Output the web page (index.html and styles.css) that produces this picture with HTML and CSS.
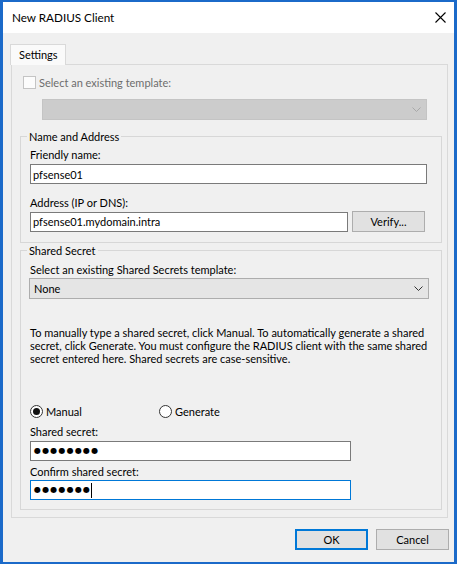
FILE: index.html
```html
<!DOCTYPE html>
<html>
<head>
<meta charset="utf-8">
<link rel="stylesheet" href="styles.css">
</head>
<body>
<div class="window">
  <div class="titlebar">
    <span class="title">New RADIUS Client</span>
    <svg class="close" width="11" height="11" viewBox="0 0 11 11"><path d="M0.5 0.5L10.5 10.5M10.5 0.5L0.5 10.5" stroke="#000" stroke-width="1.1" fill="none"/></svg>
  </div>
  <div class="body">
    <div class="tabs"><div class="tab">Settings</div></div>
    <div class="panel">
      <div class="check-row">
        <span class="checkbox"></span>
        <span class="disabled-text">Select an existing template:</span>
      </div>
      <div class="combo combo-disabled">
        <span></span>
        <svg class="chev" width="9" height="5" viewBox="0 0 9 5"><path d="M0.5 0.5L4.5 4.5L8.5 0.5" stroke="#a8a8a8" fill="none"/></svg>
      </div>

      <fieldset class="group group-name">
        <legend>Name and Address</legend>
        <label class="lbl lbl-first">Friendly name:</label>
        <input class="textbox tb-friendly" type="text" value="pfsense01">
        <label class="lbl lbl-addr">Address (IP or DNS):</label>
        <div class="addr-row">
          <input class="textbox tb-addr" type="text" value="pfsense01.mydomain.intra">
          <button class="btn btn-verify">Verify...</button>
        </div>
      </fieldset>

      <fieldset class="group group-secret">
        <legend>Shared Secret</legend>
        <label class="lbl lbl-tpl">Select an existing Shared Secrets template:</label>
        <div class="combo combo-active">
          <span>None</span>
          <svg class="chev" width="9" height="5" viewBox="0 0 9 5"><path d="M0.5 0.5L4.5 4.5L8.5 0.5" stroke="#333" fill="none"/></svg>
        </div>
        <p class="help">To manually type a shared secret, click Manual. To automatically generate a shared secret, click Generate. You must configure the RADIUS client with the same shared secret entered here. Shared secrets are case-sensitive.</p>
        <div class="radio-row">
          <div class="radio-item radio-manual"><span class="radio checked"></span><span>Manual</span></div>
          <div class="radio-item"><span class="radio"></span><span>Generate</span></div>
        </div>
        <label class="lbl lbl-secret">Shared secret:</label>
        <div class="pwbox"><span class="dots">●●●●●●●●</span></div>
        <label class="lbl lbl-confirm">Confirm shared secret:</label>
        <div class="pwbox pwbox-focus"><span class="dots">●●●●●●●</span><span class="caret"></span></div>
      </fieldset>
    </div>
    <div class="buttons">
      <button class="btn btn-ok">OK</button>
      <button class="btn btn-cancel">Cancel</button>
    </div>
  </div>
</div>
</body>
</html>
```
FILE: styles.css
```css
* { box-sizing: border-box; }
html, body { margin: 0; padding: 0; background: #1b6ac9; }
body { font-family: Lato, "Liberation Sans", Arial, sans-serif; font-size: 11px; color: #000; }

.window {
  width: 457px;
  height: 564px;
  border-style: solid;
  border-color: #1b6ac9;
  border-width: 2px 3px 2px 3px;
  background: #f0f0f0;
  display: flex;
  flex-direction: column;
}

.titlebar {
  height: 31px;
  flex: none;
  background: #fff;
  display: flex;
  align-items: center;
  justify-content: space-between;
  padding: 0 8px 0 9px;
}
.title { font-size: 11.7px; line-height: 15px; }
.close { display: block; }

.body {
  flex: 1;
  padding: 11px 6px 0 7px;
  display: flex;
  flex-direction: column;
}

.tabs { display: flex; height: 20px; }
.tab {
  height: 21px;
  padding: 0 7px 0 8px;
  line-height: 19px;
  background: #fafafa;
  border: 1px solid #d9d9d9;
  border-bottom: none;
  position: relative;
  z-index: 1;
}

.panel {
  margin-left: 1px;
  border: 1px solid #d9d9d9;
  padding: 10px 5px 7px 8px;
  background: #f0f0f0;
  display: flex;
  flex-direction: column;
}

.check-row {
  display: flex;
  align-items: center;
  height: 15px;
  line-height: 15px;
}
.checkbox {
  width: 13px;
  height: 13px;
  margin: 0 3px 0 3px;
  border: 1px solid #c4c4c4;
  background: #fcfcfc;
}
.disabled-text { color: #6d6d6d; }

.combo {
  display: flex;
  align-items: center;
  justify-content: space-between;
  height: 21px;
  border: 1px solid #c2c2c2;
  padding: 0 5px 0 4px;
}
.combo-disabled {
  margin: 9px 0 0 22px;
  width: 385px;
  background: #cccccc;
  border-color: #c4c4c4;
}
.combo-active {
  margin: 1px 0 0 -1px;
  width: 400px;
  background: #e5e5e5;
  border-color: #adadad;
}
.chev { display: block; }

.group {
  margin: 0;
  padding: 0 9px 0 9px;
  border: 1px solid #d7d7d7;
  min-inline-size: 0;
}
.group legend {
  padding: 0 2px;
  margin-left: -3px;
  line-height: 15px;
}
.group-name { margin-top: 9px; padding-bottom: 10px; }
.group-secret { margin-top: 0; padding-bottom: 9px; }

.lbl { display: block; line-height: 15px; }
.lbl-first { margin-top: 3px; }
.lbl-addr { margin-top: 11px; }
.lbl-tpl { margin-top: 4px; }
.lbl-secret { margin-top: 5px; }
.lbl-confirm { margin-top: 3px; }

.textbox {
  display: block;
  height: 20px;
  margin: 2px 0 0 0;
  padding: 0 2px;
  border: 1px solid #7a7a7a;
  background: #fff;
  font: 11px Lato, "Liberation Sans", Arial, sans-serif;
  color: #000;
  outline: none;
}
.tb-friendly { width: 397px; }
.addr-row {
  display: flex;
  align-items: center;
  gap: 4px;
  margin-top: 1px;
  height: 21px;
}
.tb-addr { width: 318px; margin: 0; }

.btn {
  height: 21px;
  width: 73px;
  padding: 0;
  background: #e1e1e1;
  border: 1px solid #adadad;
  font: 11px Lato, "Liberation Sans", Arial, sans-serif;
  color: #000;
}
.btn-verify { width: 73px; }

.help {
  margin: 27px 0 0 0;
  line-height: 13px;
  width: 400px;
}

.radio-row {
  display: flex;
  align-items: center;
  height: 15px;
  line-height: 15px;
  margin-top: 39px;
}
.radio-item { display: flex; align-items: center; gap: 3px; }
.radio-manual { width: 129px; }
.radio {
  width: 13px;
  height: 13px;
  border-radius: 50%;
  border: 1px solid #333;
  background: #fff;
  display: flex;
  align-items: center;
  justify-content: center;
}
.radio.checked::after {
  content: "";
  width: 7px;
  height: 7px;
  border-radius: 50%;
  background: #111;
}

.pwbox {
  width: 321px;
  height: 20px;
  margin-top: 2px;
  border: 1px solid #7a7a7a;
  background: #fff;
  display: flex;
  align-items: center;
  padding-left: 3px;
}
.pwbox-focus { border-color: #0078d7; margin-top: 1px; }
.dots {
  font-family: "DejaVu Sans", sans-serif;
  font-size: 8px;
  line-height: 10px;
  letter-spacing: 1.2px;
}
.caret {
  width: 1px;
  height: 15px;
  background: #000;
  margin-left: 0;
}

.buttons {
  display: flex;
  justify-content: flex-end;
  gap: 8px;
  margin-top: 11px;
  margin-right: -1px;
}
.btn-ok {
  border-color: #0078d7;
  box-shadow: inset 0 0 0 1px #0078d7;
}
```
